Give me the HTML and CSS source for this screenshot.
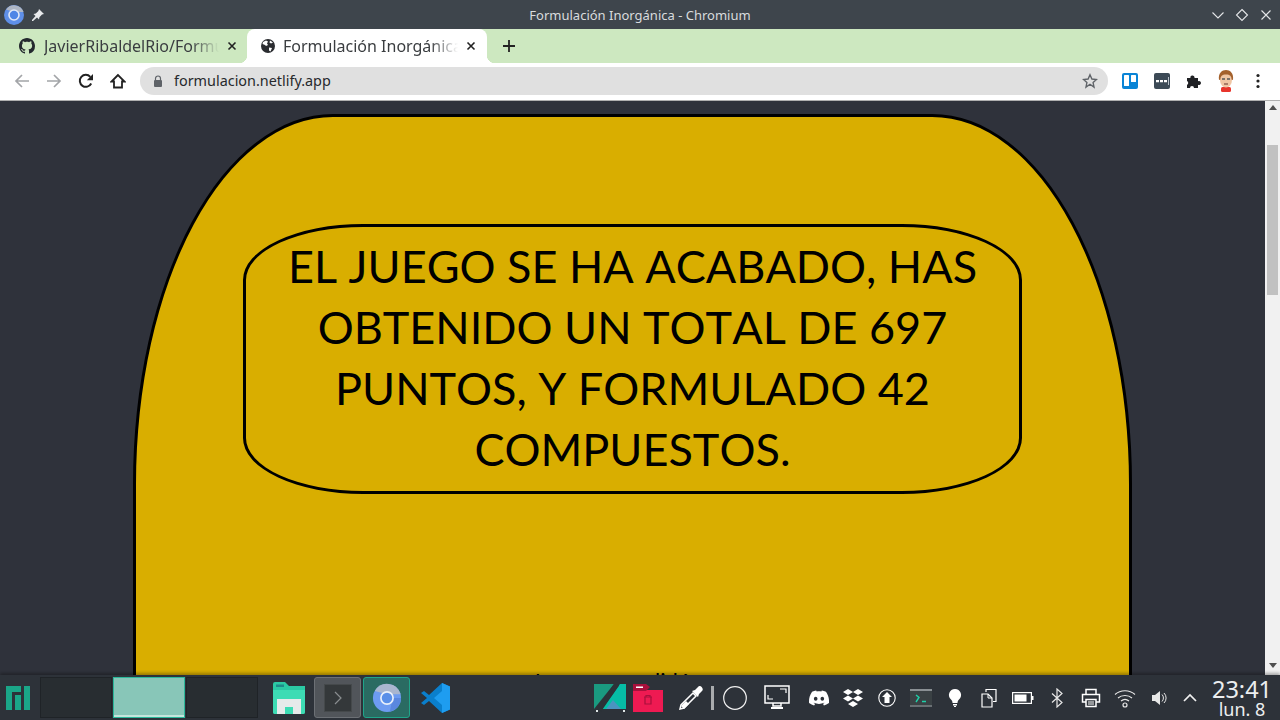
FILE: index.html
```html
<!DOCTYPE html>
<html lang="es">
<head>
    <meta charset="UTF-8">
    <meta name="viewport" content="width=device-width, initial-scale=1.0">
    <link rel="stylesheet" href="styles.css">
    <title>Formulación Inorgánica - Chromium</title>
</head>
<body>
    <!-- Window title bar -->
    <header class="titlebar">
        <div class="title-left">
            <svg class="icon-20" viewBox="0 0 20 20"><circle cx="10" cy="10" r="10" fill="#5f8fe8"/><path d="M2 4.500A10 10 0 0 1 19.600 7H10z" fill="#aeb6c4"/><circle cx="10" cy="10" r="5" fill="#4f86e6" stroke="#dfe8f8" stroke-width="1.600"/></svg>
            <svg class="icon-14" viewBox="0 0 14 14"><path d="M8 1l5 5-2 .6-2.600 2.600-.4 2.300-2-2L2 13l-1 0 0-1 3.500-4-2-2 2.300-.4L7.400 3z" fill="#e8eaec"/></svg>
        </div>
        <div class="title-text">Formulación Inorgánica - Chromium</div>
        <div class="title-btns">
            <svg class="icon-14" viewBox="0 0 14 14"><path d="M1.500 4.500L7 10l5.500-5.500" fill="none" stroke="#e4e6e8" stroke-width="1.100"/></svg>
            <svg class="icon-14" viewBox="0 0 14 14"><path d="M7 1.500L12.500 7 7 12.500 1.500 7z" fill="none" stroke="#e4e6e8" stroke-width="1.100"/></svg>
            <svg class="icon-14" viewBox="0 0 14 14"><path d="M2.500 2.500l9 9M11.500 2.500l-9 9" fill="none" stroke="#e4e6e8" stroke-width="1.100"/></svg>
        </div>
    </header>

    <!-- Tabs -->
    <div class="tabstrip">
        <div class="tab">
            <svg class="icon-16" viewBox="0 0 16 16"><path fill="#24292e" d="M8 0C3.580 0 0 3.580 0 8c0 3.540 2.290 6.530 5.470 7.590.4.07.55-.17.55-.38 0-.19-.01-.82-.01-1.490-2.010.37-2.530-.49-2.690-.94-.09-.23-.48-.94-.82-1.130-.28-.15-.68-.52-.01-.53.63-.01 1.080.58 1.230.82.72 1.210 1.870.87 2.330.66.07-.52.28-.87.51-1.070-1.780-.2-3.640-.89-3.640-3.950 0-.87.31-1.590.82-2.150-.08-.2-.36-1.020.08-2.120 0 0 .67-.21 2.200.82.64-.18 1.320-.27 2-.27.68 0 1.360.09 2 .27 1.530-1.040 2.200-.82 2.200-.82.44 1.100.16 1.920.08 2.120.51.56.82 1.270.82 2.150 0 3.070-1.870 3.750-3.650 3.950.29.25.54.73.54 1.480 0 1.070-.01 1.930-.01 2.200 0 .21.15.46.55.38A8.013 8.013 0 0016 8c0-4.420-3.580-8-8-8z"/></svg>
            <span class="tab-label">JavierRibaldelRio/Formulacion</span>
            <svg class="tab-close" viewBox="0 0 10 10"><path d="M1.500 1.500l7 7M8.500 1.500l-7 7" stroke="#222" stroke-width="1.600"/></svg>
        </div>
        <div class="tab tab-active">
            <svg class="icon-16" viewBox="0 0 16 16"><circle cx="8" cy="8" r="7" fill="#2a2c30"/><path d="M3 4l3-1.500 2 1-1 2 1 1.500-2 1-1-1-2.500-1zM9 9.500l3 .5-1.500 3.500-1.500-1zM10 2.500l3 2-2 1-1.500-1z" fill="#fff"/></svg>
            <span class="tab-label">Formulación Inorgánica</span>
            <svg class="tab-close" viewBox="0 0 10 10"><path d="M1.500 1.500l7 7M8.500 1.500l-7 7" stroke="#222" stroke-width="1.600"/></svg>
        </div>
        <svg class="tab-new" viewBox="0 0 12 12"><path d="M6 0v12M0 6h12" stroke="#222" stroke-width="1.800"/></svg>
    </div>

    <!-- Toolbar -->
    <nav class="toolbar">
        <div class="nav-btns">
            <svg class="icon-16" viewBox="0 0 16 16"><path d="M15 8H2M8 2L2 8l6 6" fill="none" stroke="#a3a5a8" stroke-width="1.700"/></svg>
            <svg class="icon-16" viewBox="0 0 16 16"><path d="M1 8h13M8 2l6 6-6 6" fill="none" stroke="#a3a5a8" stroke-width="1.700"/></svg>
            <svg class="icon-16" viewBox="0 0 16 16"><path d="M13.200 10.500A6 6 0 1 1 12.300 3.800" fill="none" stroke="#222" stroke-width="2"/><path d="M15 1v6.200H8.800z" fill="#222"/></svg>
            <svg class="icon-16" viewBox="0 0 16 16"><path d="M8 2L1.500 8.500H4V14.500H12V8.500H14.500Z" fill="none" stroke="#222" stroke-width="1.800"/></svg>
        </div>
        <div class="omnibox">
            <svg class="lock" viewBox="0 0 10 12"><path d="M2.500 5V3.500a2.500 2.500 0 0 1 5 0V5" fill="none" stroke="#5f6368" stroke-width="1.200"/><rect x="1" y="5" width="8" height="7" rx="1" fill="#5f6368"/></svg>
            <span class="url">formulacion.netlify.app</span>
            <svg class="star icon-16" viewBox="0 0 16 16"><path d="M8 1.800l1.900 4.200 4.600.5-3.400 3.100.9 4.500L8 11.300l-4 2.800.9-4.500L1.500 6.500 6.100 6z" fill="none" stroke="#5f6368" stroke-width="1.400"/></svg>
        </div>
        <div class="extensions">
            <svg class="icon-16" viewBox="0 0 16 16"><rect width="16" height="16" rx="2" fill="#0a84d6"/><rect x="2" y="2" width="5" height="11" rx=".6" fill="#fff"/><rect x="9" y="2" width="5" height="7" rx=".6" fill="#fff"/></svg>
            <svg class="icon-16" viewBox="0 0 16 16"><rect width="16" height="16" rx="2" fill="#3c4a56"/><path d="M2 7h3v2.200H2zM6 7h3v2.200H6zM10 7h3v2.200h-3z" fill="#fff"/><rect x="14" y="4" width="1" height="8" fill="#b8c0c8"/></svg>
            <svg class="icon-16" viewBox="0 0 16 16"><path d="M1 5h3.500a2 2 0 0 1 0-1.500 2.200 2.200 0 0 1 4 .5V5H12v3.200a2.100 2.100 0 0 1 3 1.800 2.100 2.100 0 0 1-3 1.800V15H8a2 2 0 0 0-4 0H1v-3.200a2 2 0 0 0 0-3.700z" fill="#202124"/></svg>
            <svg class="avatar" viewBox="0 0 16 22"><rect x="3" y="17" width="10" height="5" rx="1.500" fill="#e8352c"/><ellipse cx="8" cy="10" rx="6" ry="7.500" fill="#efc6a4"/><path d="M1 10C0 3 4 0 8 0s8 3 7 10l-1.500-.5C13.500 6 12 4.500 8 4.500S2.500 6 2.500 9.500z" fill="#a4612c"/><path d="M4 9h3M9 9h3" stroke="#555" stroke-width="1.300"/><path d="M6 14h4" stroke="#7a4a40" stroke-width="1.200"/></svg>
            <svg class="icon-16" viewBox="0 0 16 16"><circle cx="8" cy="2.500" r="1.600" fill="#222"/><circle cx="8" cy="8" r="1.600" fill="#222"/><circle cx="8" cy="13.500" r="1.600" fill="#222"/></svg>
        </div>
    </nav>

    <!-- Page -->
    <div class="viewport">
        <main class="page">
            <section class="card">
                <h1 class="result">EL JUEGO SE HA ACABADO, HAS OBTENIDO UN TOTAL DE 697 PUNTOS, Y FORMULADO 42 COMPUESTOS.</h1>
                <p class="below">Lo que se validó son</p>
            </section>
        </main>
        <div class="scrollbar">
            <span class="arrow-up"></span>
            <span class="thumb"></span>
            <span class="arrow-down"></span>
        </div>
    </div>

    <!-- Desktop panel -->
    <footer class="panel">
        <svg class="logo" viewBox="0 0 24 24"><path d="M0 0h15v6H6v18H0zM9 9h6v15H9zM18 0h6v24h-6z" fill="#1aa688"/></svg>
        <div class="pager">
            <div class="desk"></div>
            <div class="desk desk-on"></div>
            <div class="desk"></div>
        </div>
        <svg class="launcher" viewBox="0 0 32 32"><path d="M0 2a2 2 0 0 1 2-2h10l4 4h16v26a2 2 0 0 1-2 2H2a2 2 0 0 1-2-2z" fill="#2bc9a4"/><path d="M0 8h32v22a2 2 0 0 1-2 2H2a2 2 0 0 1-2-2z" fill="#3ddcb4"/><rect x="3" y="2.500" width="8" height="2.500" fill="#1f8a8a"/><path d="M4 17h24v15h-8v-7h-8v7H4z" fill="#e6eaea"/></svg>
        <div class="task task-grey">
            <div class="term-box"><svg class="icon-14" viewBox="0 0 14 14"><path d="M4 1l6 6-6 6" fill="none" stroke="#8a8e90" stroke-width="1.200"/></svg></div>
        </div>
        <div class="task task-teal">
            <svg class="chromium" viewBox="0 0 32 32"><circle cx="16" cy="16" r="15" fill="#6d9bf1"/><path d="M3 8.500A15 15 0 0 1 30.500 12H16z" fill="#a9b6cf"/><path d="M22 16h9a15 15 0 0 1-12 14.700z" fill="#5a87de"/><circle cx="16" cy="16" r="6.500" fill="#5a8fe8" stroke="#e8effa" stroke-width="1.800"/></svg>
        </div>
        <svg class="launcher" viewBox="0 0 30 30"><path d="M21 0l8 3.500v23L21 30 8 18l-5 4-3-2 6-5-6-5 3-2 5 4z" fill="#0a7fcc"/><path d="M21 0l8 3.500v23L21 30zM21 8l-8 7 8 7z" fill="#1e9df0" fill-rule="evenodd"/></svg>

        <div class="tray">
            <svg class="kvantum" viewBox="0 0 32 28"><path d="M0 0h20L0 25z" fill="#1a9a80"/><path d="M32 0H26L8 25h24z" fill="#06bda6"/><path d="M12 25l7-9 8 9z" fill="#4a94c0"/><path d="M23 0L5 26" stroke="#2c3238" stroke-width="5"/><path d="M2 26h2v2H2zM29 26h2v2h-2z" fill="#dfe6e6"/></svg>
            <svg class="trash-folder" viewBox="0 0 30 28"><path d="M0 6h30v22H0z" fill="#ee1a52"/><path d="M0 0h13l4 3-4 4H0z" fill="#a8103c"/><rect x="3" y="2.500" width="7" height="1.500" fill="#fff"/><path d="M11 13h8M13 13v-1.500h4V13M12 13v7h6v-7" fill="none" stroke="#a8103c" stroke-width="1.200"/></svg>
            <svg class="dropper" viewBox="0 0 24 24"><path d="M1 23l1-4L14 7l3 3L5 22z" fill="none" stroke="#fff" stroke-width="1.500"/><path d="M2 20l5-5 3 3-5 5z" fill="#fff"/><path d="M13 5l6 6 1-3 3-3c1-1 1-2 0-3.500S20-.5 19 1l-3 3z" fill="#fff"/></svg>
            <span class="tray-sep"></span>
            <svg class="circle" viewBox="0 0 24 24"><circle cx="12" cy="12" r="11.300" fill="none" stroke="#f0f0f0" stroke-width="1.200"/></svg>
            <svg class="monitor" viewBox="0 0 26 25"><path d="M1 1h24v17H1zM9 18h8v3H9z" fill="none" stroke="#fff" stroke-width="1.500"/><path d="M7 22h12v2H7z" fill="#fff"/><path d="M16 4h6v4M4 10v4h5" fill="none" stroke="#fff" stroke-width="1.200"/></svg>
            <div class="tray-icons">
                <svg class="icon-20" viewBox="0 0 24 24"><path fill="#fff" d="M20.317 4.370a19.790 19.790 0 00-4.885-1.515c-.211.375-.445.865-.687 1.286-1.845-.276-3.680-.276-5.487 0-.164-.393-.406-.874-.696-1.286a19.740 19.740 0 00-4.885 1.515C.533 9.046-.319 13.580.099 18.058c2.053 1.507 4.041 2.423 6.024 3.085.462-.630.873-1.295 1.268-2.100-.653-.247-1.274-.549-1.880-1.020l.442-.302c3.928 1.793 8.180 1.793 12.139 0l.451.302c-.6.471-1.250.773-1.880 1.020.36.698.772 1.363 1.268 2.100 1.961-.607 3.950-1.522 6.033-3.085.5-5.177-.838-9.674-3.580-13.688zM8.020 15.331c-1.182 0-2.157-1.086-2.157-2.419s.956-2.419 2.157-2.419c1.211 0 2.176 1.095 2.157 2.419 0 1.333-.956 2.419-2.157 2.419zm7.975 0c-1.183 0-2.157-1.086-2.157-2.419s.955-2.419 2.157-2.419c1.210 0 2.175 1.095 2.157 2.419 0 1.333-.947 2.419-2.157 2.419z"/></svg>
                <svg class="icon-20" viewBox="0 0 20 20"><path d="M5 1l5 3-5 3-5-3zM15 1l5 3-5 3-5-3zM5 7.500l5 3-5 3-5-3zM15 7.500l5 3-5 3-5-3zM10 13l5 3-5 3-5-3z" fill="#fff"/></svg>
                <svg class="icon-20" viewBox="0 0 20 20"><circle cx="10" cy="10" r="8.200" fill="none" stroke="#fff" stroke-width="1.100"/><path d="M10 4l5 5h-2.500v6h-5V9H5z" fill="#fff"/></svg>
                <svg class="icon-22" viewBox="0 0 22 18"><rect width="22" height="18" fill="#3a4144"/><rect width="22" height="2" fill="#8a9094"/><rect y="16" width="22" height="2" fill="#6a7074"/><path d="M6 6l3 2.500L6 13M12 12.500h4" fill="none" stroke="#1fd0a8" stroke-width="1.400"/></svg>
                <svg class="icon-20" viewBox="0 0 20 20"><path d="M10 1a6 6 0 0 1 4 10.500c-1 1-1.500 2-1.500 3.500h-5c0-1.500-.5-2.500-1.500-3.500A6 6 0 0 1 10 1zM8 16h4v1.500h-4zM9 18h2v1H9z" fill="#fff"/></svg>
                <svg class="icon-20" viewBox="0 0 20 20"><path d="M7 4V1.500h10v12h-3" fill="none" stroke="#fff" stroke-width="1.200"/><path d="M3 6h6l4 4v9H3z" fill="none" stroke="#fff" stroke-width="1.200"/><path d="M9 6v4h4" fill="none" stroke="#fff" stroke-width="1"/></svg>
                <svg class="icon-22" viewBox="0 0 22 12"><rect x=".6" y=".6" width="18.800" height="10.800" fill="none" stroke="#fff" stroke-width="1.200"/><rect x="2.500" y="2.500" width="12" height="7" fill="#fff"/><rect x="20" y="4" width="1.500" height="4" fill="#fff"/></svg>
                <svg class="icon-20" viewBox="0 0 20 20"><path d="M5 5.500l10 9L10 19V1l5 4.500-10 9" fill="none" stroke="#e8e8e8" stroke-width="1.200"/></svg>
                <svg class="icon-20" viewBox="0 0 20 20"><path d="M5 6V1.500h10V6M5 14H1.500V6.500h17V14H15" fill="none" stroke="#fff" stroke-width="1.500"/><path d="M5 11.500h10v7H5z" fill="none" stroke="#fff" stroke-width="1.500"/><path d="M7 14h6M7 16h6" stroke="#fff"/></svg>
                <svg class="icon-22" viewBox="0 0 22 20"><path d="M1 6.500c5.500-5 14.500-5 20 0M4 10c3.800-3.400 10.200-3.400 14 0M7 13c2.300-1.900 5.700-1.900 8 0" fill="none" stroke="#e8e8e8" stroke-width="1.100"/><circle cx="11" cy="17" r="2" fill="none" stroke="#e8e8e8" stroke-width="1.200"/></svg>
                <svg class="icon-16" viewBox="0 0 16 16"><path d="M1 5h3l5-4v14l-5-4H1z" fill="#e8e8e8"/><path d="M11 4.500a5 5 0 0 1 0 7M13 3a7 7 0 0 1 0 10" fill="none" stroke="#e8e8e8" stroke-width="1"/></svg>
                <svg class="icon-14 tray-chevron" viewBox="0 0 14 14"><path d="M1 10l6-6 6 6" fill="none" stroke="#f0f0f0" stroke-width="1.700"/></svg>
            </div>
            <div class="clock">
                <span class="clock-time">23:41</span>
                <span class="clock-date">lun. 8</span>
            </div>
        </div>
    </footer>
</body>
</html>
```

FILE: styles.css
```css
* {
    box-sizing: border-box;
}

body {
    margin: 0;
    width: 1280px;
    height: 720px;
    overflow: hidden;
    display: flex;
    flex-direction: column;
    font-family: 'Noto Sans', sans-serif;
    background-color: #2f323b;
}

svg {
    display: block;
    flex-shrink: 0;
}

.icon-14 { width: 14px; height: 14px; }
.icon-16 { width: 16px; height: 16px; }
.icon-20 { width: 20px; height: 20px; }
.icon-22 { width: 22px; height: 20px; }

/* Title bar */
.titlebar {
    height: 29px;
    flex-shrink: 0;
    display: flex;
    align-items: center;
    padding: 0 7px 0 4px;
    background-color: #3e454c;
}

.title-left {
    width: 116px;
    display: flex;
    align-items: center;
    gap: 7px;
}

.title-text {
    flex: 1;
    text-align: center;
    font-size: 13px;
    color: #d9dcde;
}

.title-btns {
    width: 113px;
    display: flex;
    justify-content: flex-end;
    gap: 10px;
}

/* Tabs */
.tabstrip {
    height: 34px;
    flex-shrink: 0;
    display: flex;
    align-items: center;
    background-color: #cde8c0;
    padding-left: 7px;
}

.tab {
    width: 240px;
    height: 34px;
    display: flex;
    align-items: center;
    padding: 0 10px 0 12px;
    font-size: 16px;
    color: #3a3d40;
    position: relative;
}

.tab-active {
    background-color: #fff;
    border-radius: 8px 8px 0 0;
    padding: 0 11px 0 13px;
}

.tab-active::before,
.tab-active::after {
    content: "";
    position: absolute;
    bottom: 0;
    width: 8px;
    height: 8px;
}

.tab-active::before {
    left: -8px;
    background: radial-gradient(circle at 0 0, transparent 8px, #fff 8.500px);
}

.tab-active::after {
    right: -8px;
    background: radial-gradient(circle at 100% 0, transparent 8px, #fff 8.500px);
}

.tab-label {
    flex: 1;
    min-width: 0;
    margin-left: 9px;
    white-space: nowrap;
    overflow: hidden;
    -webkit-mask-image: linear-gradient(to right, #000 84%, transparent 100%);
    mask-image: linear-gradient(to right, #000 84%, transparent 100%);
}

.tab-active .tab-label {
    margin-left: 7px;
}

.tab-close {
    width: 10px;
    height: 10px;
    margin-left: 8px;
}

.tab-new {
    width: 12px;
    height: 12px;
    margin-left: 16px;
}

/* Toolbar */
.toolbar {
    height: 38px;
    flex-shrink: 0;
    display: flex;
    align-items: center;
    background-color: #fff;
    border-bottom: 1px solid #b0b0b0;
    padding: 0 14px 1px;
}

.nav-btns {
    display: flex;
    gap: 16px;
}

.omnibox {
    width: 968px;
    height: 28px;
    margin-left: 14px;
    border-radius: 14px;
    background-color: #e0e0e0;
    display: flex;
    align-items: center;
    padding: 0 10px 0 13px;
}

.lock {
    width: 10px;
    height: 12px;
}

.url {
    flex: 1;
    margin-left: 11px;
    padding-bottom: 2px;
    font-size: 14.400px;
    color: #27292c;
}

.extensions {
    display: flex;
    align-items: center;
    gap: 16px;
    margin-left: 14px;
}

.avatar {
    width: 16px;
    height: 22px;
}

/* Page */
.viewport {
    height: 574px;
    flex-shrink: 0;
    display: flex;
    overflow: hidden;
}

.page {
    flex: 1;
    overflow: hidden;
    padding: 13px 0 0 133px;
    background-color: #2f323b;
}

.card {
    width: 999px;
    height: 1100px;
    padding: 107px 107px 0;
    border: 3px solid #000;
    border-radius: 200px / 370px;
    background-color: #d9ae00;
    text-align: center;
    font-family: 'Lato', sans-serif;
    font-kerning: none;
    color: #000;
}

.result {
    margin: 0;
    padding: 9px 30px 11px;
    border: 3px solid #000;
    border-radius: 120px / 56px;
    font-size: 45px;
    font-weight: 400;
    line-height: 61px;
}

.below {
    margin: 173px 0 0;
    font-size: 22px;
}

.scrollbar {
    width: 15px;
    flex-shrink: 0;
    display: flex;
    flex-direction: column;
    align-items: center;
    background-color: #f1f1f1;
    padding: 4px 2px;
}

.arrow-up,
.arrow-down {
    width: 0;
    height: 0;
    border-left: 4px solid transparent;
    border-right: 4px solid transparent;
}

.arrow-up {
    border-bottom: 5px solid #505050;
}

.arrow-down {
    margin-top: 368px;
    border-top: 5px solid #505050;
}

.thumb {
    width: 11px;
    height: 150px;
    margin-top: 35px;
    background-color: #c1c1c1;
}

/* Desktop panel */
.panel {
    height: 45px;
    flex-shrink: 0;
    display: flex;
    align-items: center;
    background-color: #2d3239;
    padding: 0 7px 0 6px;
    box-shadow: 0 -2px 3px rgba(0, 0, 0, 0.3);
    position: relative;
}

.logo {
    width: 24px;
    height: 24px;
}

.pager {
    display: flex;
    gap: 1px;
    margin-left: 10px;
}

.desk {
    width: 72px;
    height: 41px;
    background-color: #282d31;
    border: 1px solid #1f2327;
}

.desk-on {
    background-color: #88c6b8;
    border-color: #2bb89a;
    box-shadow: inset 0 -2px 0 #c4e6dc;
}

.launcher {
    width: 32px;
    height: 32px;
    margin-left: 15px;
}

.launcher + .task {
    margin-left: 9px;
}

.task {
    width: 47px;
    height: 41px;
    border-radius: 3px;
    display: flex;
    align-items: center;
    justify-content: center;
}

.task-grey {
    background-color: #51555a;
    border: 1px solid #6c7075;
}

.task-teal {
    margin-left: 2px;
    background-color: #2a6b62;
    border: 1px solid #1fa58a;
}

.term-box {
    width: 28px;
    height: 28px;
    background-color: #34383a;
    border: 1px solid #45494b;
    display: flex;
    align-items: center;
    justify-content: center;
}

.chromium {
    width: 30px;
    height: 30px;
}

.task-teal + .launcher {
    width: 30px;
    height: 30px;
    margin-left: 11px;
}

.tray {
    margin-left: auto;
    display: flex;
    align-items: center;
}

.kvantum {
    width: 32px;
    height: 28px;
}

.trash-folder {
    width: 30px;
    height: 28px;
    margin-left: 7px;
}

.dropper {
    width: 24px;
    height: 24px;
    margin-left: 16px;
}

.tray-sep {
    width: 3px;
    height: 24px;
    margin-left: 8px;
    background-color: #a9abad;
}

.circle {
    width: 24px;
    height: 24px;
    margin-left: 9px;
}

.monitor {
    width: 26px;
    height: 25px;
    margin-left: 17px;
}

.tray-icons {
    display: grid;
    grid-template-columns: repeat(12, 34px);
    justify-items: center;
    align-items: center;
    margin-left: 12px;
}

.tray-chevron {
    margin-right: 6px;
}

.clock {
    width: 62px;
    margin-left: 1px;
    display: flex;
    flex-direction: column;
    align-items: center;
    color: #eceeef;
}

.clock-time {
    font-size: 23.500px;
    line-height: 22px;
}

.clock-date {
    font-size: 18px;
    line-height: 18px;
}
```
